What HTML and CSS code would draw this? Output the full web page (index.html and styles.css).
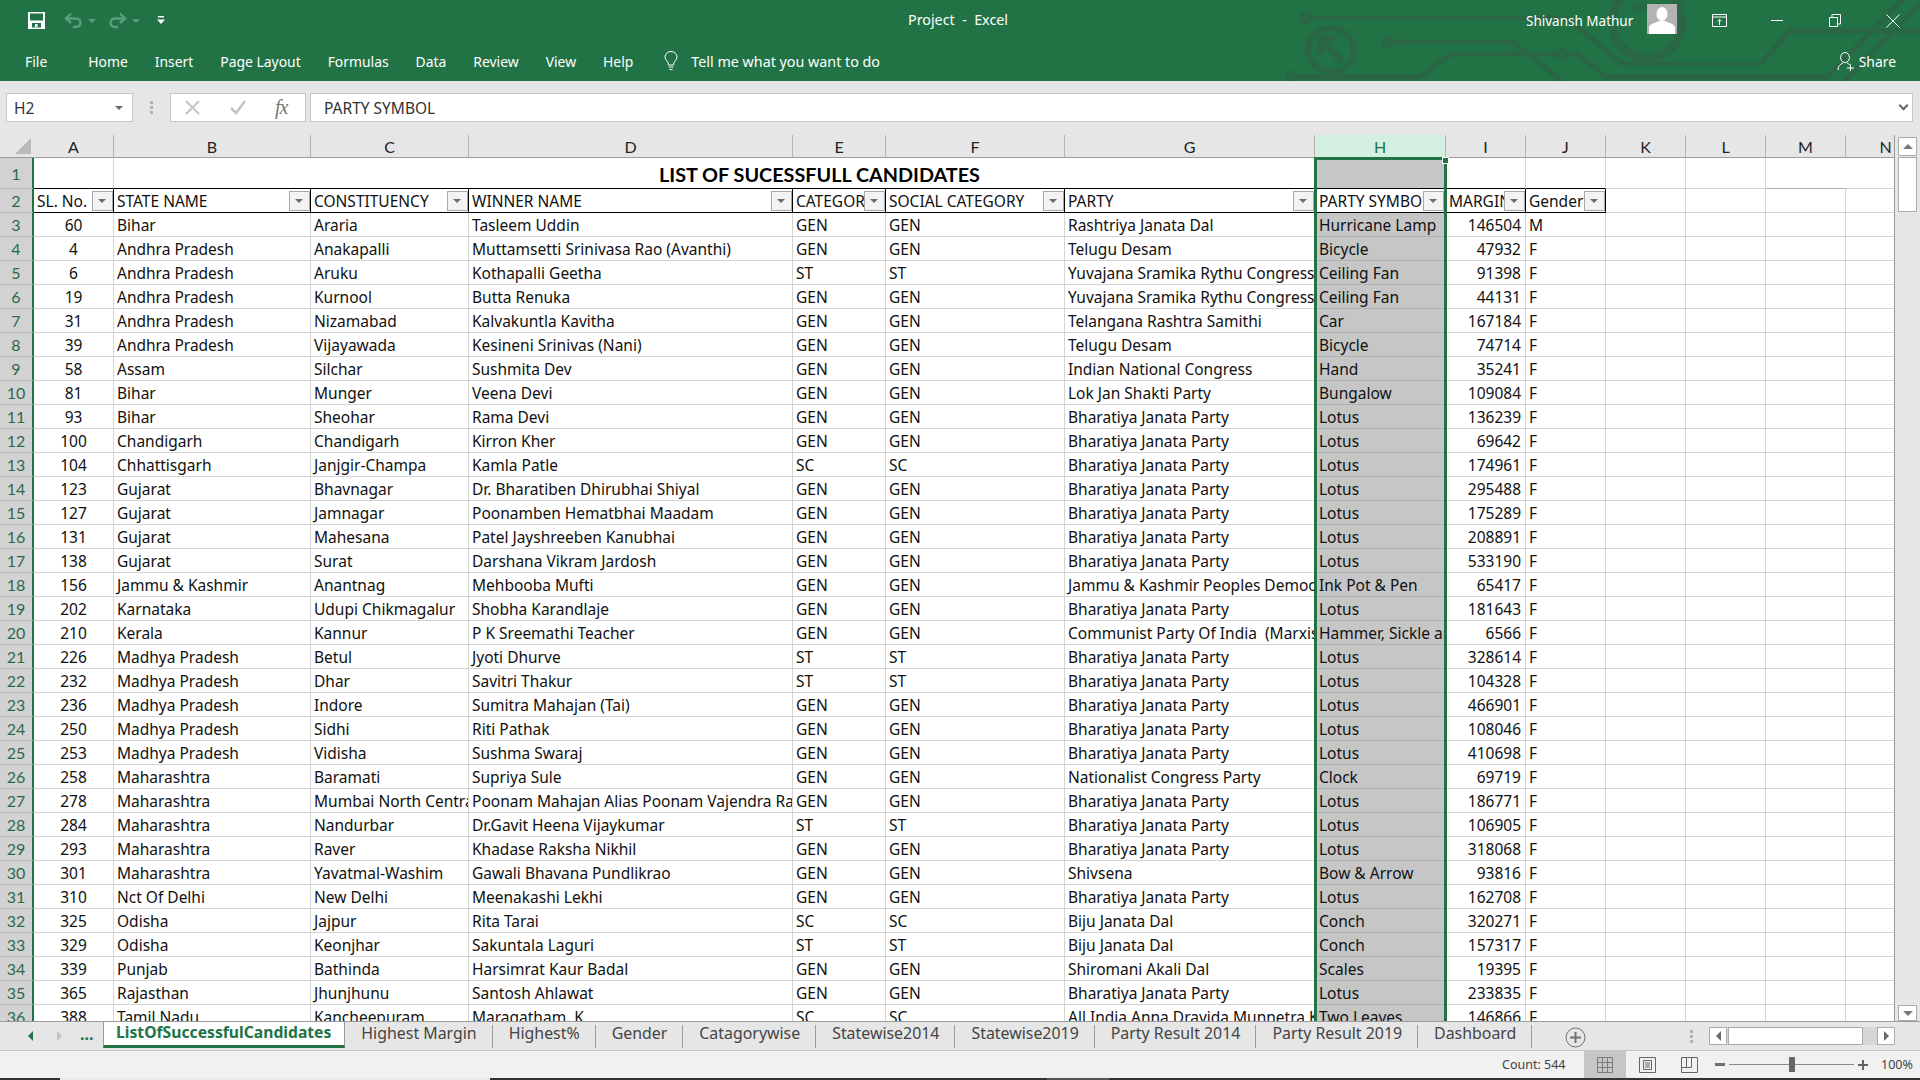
FILE: index.html
```html
<!DOCTYPE html>
<html lang="en">
<head>
  <meta charset="UTF-8">
  <title>Project - Excel</title>
  <link rel="stylesheet" href="styles.css">
</head>
<body>

<div class="ribbon">
  <!-- circuit pattern behind the title bar -->
  <svg class="circuit" width="640" height="81" viewBox="1280 0 640 81" fill="none" stroke="#2a6644" stroke-width="5">
    <circle cx="1306" cy="18" r="4"/>
    <path d="M1310 18H1566L1623 64H1760L1790 31H1920"/>
    <circle cx="1388" cy="42" r="4"/>
    <path d="M1392 42H1513L1562 81"/>
    <circle cx="1292" cy="77" r="4"/>
    <path d="M1296 77H1419L1451 54H1558"/>
    <circle cx="1562" cy="54" r="4"/>
    <path d="M1566 54H1578L1606 77H1827L1904 -2"/>
    <path d="M1843 83L1920 4"/>
    <ellipse cx="1331" cy="50" rx="23" ry="22" stroke-width="6"/>
    <path d="M1322 40L1342 62M1321 54V39H1336" stroke-width="7"/>
    <ellipse cx="1647" cy="22" rx="35" ry="36" stroke-width="8"/>
    <path d="M1633 7H1660V30" stroke-width="7"/>
  </svg>

  <div class="titlebar">
    <div class="qat">
      <svg class="save" width="17" height="17" viewBox="0 0 17 17"><path fill="#fff" d="M0 0H17V17H0ZM2 1.500V8.500H15V1.500ZM4 11V15.500H13V11ZM7 12H9.500V15H7Z" fill-rule="evenodd"/></svg>
      <svg class="undo" width="19" height="17" viewBox="0 0 19 17" fill="none" stroke="#5c9d7b" stroke-width="2.400"><path d="M7 1.500L2 6.500L7 11"/><path d="M3 6.500H12C18 6.500 18 15 12 15H9"/></svg>
      <span class="caret dim"></span>
      <svg class="redo" width="19" height="17" viewBox="0 0 19 17" fill="none" stroke="#5c9d7b" stroke-width="2.400"><path d="M12 1.500L17 6.500L12 11"/><path d="M16 6.500H7C1 6.500 1 15 7 15H10"/></svg>
      <span class="caret dim"></span>
      <svg class="custom" width="8" height="9" viewBox="0 0 8 9"><path fill="#fff" d="M1 0H7V1.500H1ZM0 3.500H8L4 8Z"/></svg>
    </div>
    <div class="doc-title">Project&nbsp; -&nbsp; Excel</div>
    <div class="account">
      <span class="username">Shivansh Mathur</span>
      <span class="avatar">
        <svg width="30" height="30" viewBox="0 0 30 30"><rect width="30" height="30" fill="#b3b3b3"/><ellipse cx="15" cy="10" rx="5.500" ry="7" fill="#fff"/><path fill="#fff" d="M2 30V24C2 20 8 19 12 17H18C22 19 28 20 28 24V30Z"/></svg>
      </span>
      <svg class="win-ribbon" width="15" height="13" viewBox="0 0 15 13" fill="none" stroke="#fff"><path d="M.5 .5H14.500V12.500H.5ZM.5 3H14.500M7.500 11V5.500M5.500 7.500L7.500 5.500L9.500 7.500"/></svg>
      <svg class="win-min" width="12" height="1" viewBox="0 0 12 1"><path stroke="#fff" d="M0 .5H12"/></svg>
      <svg class="win-max" width="12" height="13" viewBox="0 0 12 13" fill="none" stroke="#fff"><path d="M.5 3.500H8.500V12.500H.5ZM3 3.500V.5H11.500V10H8.500"/></svg>
      <svg class="win-close" width="14" height="14" viewBox="0 0 14 14" fill="none" stroke="#fff"><path d="M.5 .5L13.500 13.500M13.500 .5L.5 13.500"/></svg>
    </div>
  </div>

  <div class="menubar">
    <span class="menu-file">File</span>
    <span>Home</span>
    <span>Insert</span>
    <span>Page Layout</span>
    <span>Formulas</span>
    <span>Data</span>
    <span>Review</span>
    <span>View</span>
    <span>Help</span>
    <svg class="bulb" width="14" height="20" viewBox="0 0 14 20" fill="none" stroke="#fff"><path d="M4.500 14C4.500 10 1 9.500 1 6A6 5.500 0 0 1 13 6C13 9.500 9.500 10 9.500 14ZM4.500 16H9.500M5.500 18.500H8.500"/></svg>
    <span class="tell">Tell me what you want to do</span>
    <span class="share">
      <svg width="18" height="19" viewBox="0 0 18 19" fill="none" stroke="#fff"><ellipse cx="8" cy="5.500" rx="4.500" ry="5"/><path d="M1 18C1 14 3 12.500 6 11M10 11C11 11.500 12 12 13 13M10 16H17M13.500 12.500V19"/></svg>
      Share
    </span>
  </div>
</div>

<div class="formula-bar">
  <div class="name-box">H2<span class="caret"></span></div>
  <span class="grip"></span>
  <div class="fx-box">
    <svg width="15" height="15" viewBox="0 0 15 15" fill="none" stroke="#c4c4c4" stroke-width="2"><path d="M1 1L14 14M14 1L1 14"/></svg>
    <svg width="16" height="15" viewBox="0 0 16 15" fill="none" stroke="#c4c4c4" stroke-width="2.500"><path d="M1 8L6 13L15 1"/></svg>
    <span class="fx">fx</span>
  </div>
  <div class="formula-input">PARTY SYMBOL<span class="chevron"></span></div>
</div>

<div class="sheet">
  <div class="grid">
    <table>
      <colgroup>
        <col class="c-head"><col class="c-a"><col class="c-b"><col class="c-c"><col class="c-d"><col class="c-e"><col class="c-f"><col class="c-g"><col class="c-h"><col class="c-n"><col class="c-n"><col class="c-n"><col class="c-n"><col class="c-n"><col class="c-n">
      </colgroup>
      <thead>
        <tr>
          <th class="corner"><span class="corner-mark"></span></th>
          <th>A</th><th>B</th><th>C</th><th>D</th><th>E</th><th>F</th><th>G</th><th class="on">H</th><th>I</th><th>J</th><th>K</th><th>L</th><th>M</th><th>N</th>
        </tr>
      </thead>
      <tbody>
        <tr class="r1"><th>1</th><td></td><td class="title" colspan="6">LIST OF SUCESSFULL CANDIDATES</td><td></td><td></td><td></td><td></td><td></td><td></td><td></td></tr>
        <tr class="r2"><th>2</th>
          <td>SL. No.<i></i></td><td>STATE NAME<i></i></td><td>CONSTITUENCY<i></i></td><td>WINNER NAME<i></i></td><td>CATEGORY<i></i></td><td>SOCIAL CATEGORY<i></i></td><td>PARTY<i></i></td><td class="active">PARTY SYMBOL<i></i></td><td>MARGIN<i></i></td><td>Gender<i></i></td><td></td><td></td><td></td><td></td></tr>
        <tr><th>3</th><td>60</td><td>Bihar</td><td>Araria</td><td>Tasleem Uddin</td><td>GEN</td><td>GEN</td><td>Rashtriya Janata Dal</td><td>Hurricane Lamp</td><td>146504</td><td>M</td><td></td><td></td><td></td><td></td></tr>
        <tr><th>4</th><td>4</td><td>Andhra Pradesh</td><td>Anakapalli</td><td>Muttamsetti Srinivasa Rao (Avanthi)</td><td>GEN</td><td>GEN</td><td>Telugu Desam</td><td>Bicycle</td><td>47932</td><td>F</td><td></td><td></td><td></td><td></td></tr>
        <tr><th>5</th><td>6</td><td>Andhra Pradesh</td><td>Aruku</td><td>Kothapalli Geetha</td><td>ST</td><td>ST</td><td>Yuvajana Sramika Rythu Congress Party</td><td>Ceiling Fan</td><td>91398</td><td>F</td><td></td><td></td><td></td><td></td></tr>
        <tr><th>6</th><td>19</td><td>Andhra Pradesh</td><td>Kurnool</td><td>Butta Renuka</td><td>GEN</td><td>GEN</td><td>Yuvajana Sramika Rythu Congress Party</td><td>Ceiling Fan</td><td>44131</td><td>F</td><td></td><td></td><td></td><td></td></tr>
        <tr><th>7</th><td>31</td><td>Andhra Pradesh</td><td>Nizamabad</td><td>Kalvakuntla Kavitha</td><td>GEN</td><td>GEN</td><td>Telangana Rashtra Samithi</td><td>Car</td><td>167184</td><td>F</td><td></td><td></td><td></td><td></td></tr>
        <tr><th>8</th><td>39</td><td>Andhra Pradesh</td><td>Vijayawada</td><td>Kesineni Srinivas (Nani)</td><td>GEN</td><td>GEN</td><td>Telugu Desam</td><td>Bicycle</td><td>74714</td><td>F</td><td></td><td></td><td></td><td></td></tr>
        <tr><th>9</th><td>58</td><td>Assam</td><td>Silchar</td><td>Sushmita Dev</td><td>GEN</td><td>GEN</td><td>Indian National Congress</td><td>Hand</td><td>35241</td><td>F</td><td></td><td></td><td></td><td></td></tr>
        <tr><th>10</th><td>81</td><td>Bihar</td><td>Munger</td><td>Veena Devi</td><td>GEN</td><td>GEN</td><td>Lok Jan Shakti Party</td><td>Bungalow</td><td>109084</td><td>F</td><td></td><td></td><td></td><td></td></tr>
        <tr><th>11</th><td>93</td><td>Bihar</td><td>Sheohar</td><td>Rama Devi</td><td>GEN</td><td>GEN</td><td>Bharatiya Janata Party</td><td>Lotus</td><td>136239</td><td>F</td><td></td><td></td><td></td><td></td></tr>
        <tr><th>12</th><td>100</td><td>Chandigarh</td><td>Chandigarh</td><td>Kirron Kher</td><td>GEN</td><td>GEN</td><td>Bharatiya Janata Party</td><td>Lotus</td><td>69642</td><td>F</td><td></td><td></td><td></td><td></td></tr>
        <tr><th>13</th><td>104</td><td>Chhattisgarh</td><td>Janjgir-Champa</td><td>Kamla Patle</td><td>SC</td><td>SC</td><td>Bharatiya Janata Party</td><td>Lotus</td><td>174961</td><td>F</td><td></td><td></td><td></td><td></td></tr>
        <tr><th>14</th><td>123</td><td>Gujarat</td><td>Bhavnagar</td><td>Dr. Bharatiben Dhirubhai Shiyal</td><td>GEN</td><td>GEN</td><td>Bharatiya Janata Party</td><td>Lotus</td><td>295488</td><td>F</td><td></td><td></td><td></td><td></td></tr>
        <tr><th>15</th><td>127</td><td>Gujarat</td><td>Jamnagar</td><td>Poonamben Hematbhai Maadam</td><td>GEN</td><td>GEN</td><td>Bharatiya Janata Party</td><td>Lotus</td><td>175289</td><td>F</td><td></td><td></td><td></td><td></td></tr>
        <tr><th>16</th><td>131</td><td>Gujarat</td><td>Mahesana</td><td>Patel Jayshreeben Kanubhai</td><td>GEN</td><td>GEN</td><td>Bharatiya Janata Party</td><td>Lotus</td><td>208891</td><td>F</td><td></td><td></td><td></td><td></td></tr>
        <tr><th>17</th><td>138</td><td>Gujarat</td><td>Surat</td><td>Darshana Vikram Jardosh</td><td>GEN</td><td>GEN</td><td>Bharatiya Janata Party</td><td>Lotus</td><td>533190</td><td>F</td><td></td><td></td><td></td><td></td></tr>
        <tr><th>18</th><td>156</td><td>Jammu &amp; Kashmir</td><td>Anantnag</td><td>Mehbooba Mufti</td><td>GEN</td><td>GEN</td><td>Jammu &amp; Kashmir Peoples Democratic Party</td><td>Ink Pot &amp; Pen</td><td>65417</td><td>F</td><td></td><td></td><td></td><td></td></tr>
        <tr><th>19</th><td>202</td><td>Karnataka</td><td>Udupi Chikmagalur</td><td>Shobha Karandlaje</td><td>GEN</td><td>GEN</td><td>Bharatiya Janata Party</td><td>Lotus</td><td>181643</td><td>F</td><td></td><td></td><td></td><td></td></tr>
        <tr><th>20</th><td>210</td><td>Kerala</td><td>Kannur</td><td>P K Sreemathi Teacher</td><td>GEN</td><td>GEN</td><td>Communist Party Of India&nbsp; (Marxist)</td><td>Hammer, Sickle and Star</td><td>6566</td><td>F</td><td></td><td></td><td></td><td></td></tr>
        <tr><th>21</th><td>226</td><td>Madhya Pradesh</td><td>Betul</td><td>Jyoti Dhurve</td><td>ST</td><td>ST</td><td>Bharatiya Janata Party</td><td>Lotus</td><td>328614</td><td>F</td><td></td><td></td><td></td><td></td></tr>
        <tr><th>22</th><td>232</td><td>Madhya Pradesh</td><td>Dhar</td><td>Savitri Thakur</td><td>ST</td><td>ST</td><td>Bharatiya Janata Party</td><td>Lotus</td><td>104328</td><td>F</td><td></td><td></td><td></td><td></td></tr>
        <tr><th>23</th><td>236</td><td>Madhya Pradesh</td><td>Indore</td><td>Sumitra Mahajan (Tai)</td><td>GEN</td><td>GEN</td><td>Bharatiya Janata Party</td><td>Lotus</td><td>466901</td><td>F</td><td></td><td></td><td></td><td></td></tr>
        <tr><th>24</th><td>250</td><td>Madhya Pradesh</td><td>Sidhi</td><td>Riti Pathak</td><td>GEN</td><td>GEN</td><td>Bharatiya Janata Party</td><td>Lotus</td><td>108046</td><td>F</td><td></td><td></td><td></td><td></td></tr>
        <tr><th>25</th><td>253</td><td>Madhya Pradesh</td><td>Vidisha</td><td>Sushma Swaraj</td><td>GEN</td><td>GEN</td><td>Bharatiya Janata Party</td><td>Lotus</td><td>410698</td><td>F</td><td></td><td></td><td></td><td></td></tr>
        <tr><th>26</th><td>258</td><td>Maharashtra</td><td>Baramati</td><td>Supriya Sule</td><td>GEN</td><td>GEN</td><td>Nationalist Congress Party</td><td>Clock</td><td>69719</td><td>F</td><td></td><td></td><td></td><td></td></tr>
        <tr><th>27</th><td>278</td><td>Maharashtra</td><td>Mumbai North Central</td><td>Poonam Mahajan Alias Poonam Vajendra Rao</td><td>GEN</td><td>GEN</td><td>Bharatiya Janata Party</td><td>Lotus</td><td>186771</td><td>F</td><td></td><td></td><td></td><td></td></tr>
        <tr><th>28</th><td>284</td><td>Maharashtra</td><td>Nandurbar</td><td>Dr.Gavit Heena Vijaykumar</td><td>ST</td><td>ST</td><td>Bharatiya Janata Party</td><td>Lotus</td><td>106905</td><td>F</td><td></td><td></td><td></td><td></td></tr>
        <tr><th>29</th><td>293</td><td>Maharashtra</td><td>Raver</td><td>Khadase Raksha Nikhil</td><td>GEN</td><td>GEN</td><td>Bharatiya Janata Party</td><td>Lotus</td><td>318068</td><td>F</td><td></td><td></td><td></td><td></td></tr>
        <tr><th>30</th><td>301</td><td>Maharashtra</td><td>Yavatmal-Washim</td><td>Gawali Bhavana Pundlikrao</td><td>GEN</td><td>GEN</td><td>Shivsena</td><td>Bow &amp; Arrow</td><td>93816</td><td>F</td><td></td><td></td><td></td><td></td></tr>
        <tr><th>31</th><td>310</td><td>Nct Of Delhi</td><td>New Delhi</td><td>Meenakashi Lekhi</td><td>GEN</td><td>GEN</td><td>Bharatiya Janata Party</td><td>Lotus</td><td>162708</td><td>F</td><td></td><td></td><td></td><td></td></tr>
        <tr><th>32</th><td>325</td><td>Odisha</td><td>Jajpur</td><td>Rita Tarai</td><td>SC</td><td>SC</td><td>Biju Janata Dal</td><td>Conch</td><td>320271</td><td>F</td><td></td><td></td><td></td><td></td></tr>
        <tr><th>33</th><td>329</td><td>Odisha</td><td>Keonjhar</td><td>Sakuntala Laguri</td><td>ST</td><td>ST</td><td>Biju Janata Dal</td><td>Conch</td><td>157317</td><td>F</td><td></td><td></td><td></td><td></td></tr>
        <tr><th>34</th><td>339</td><td>Punjab</td><td>Bathinda</td><td>Harsimrat Kaur Badal</td><td>GEN</td><td>GEN</td><td>Shiromani Akali Dal</td><td>Scales</td><td>19395</td><td>F</td><td></td><td></td><td></td><td></td></tr>
        <tr><th>35</th><td>365</td><td>Rajasthan</td><td>Jhunjhunu</td><td>Santosh Ahlawat</td><td>GEN</td><td>GEN</td><td>Bharatiya Janata Party</td><td>Lotus</td><td>233835</td><td>F</td><td></td><td></td><td></td><td></td></tr>
        <tr><th>36</th><td>388</td><td>Tamil Nadu</td><td>Kancheepuram</td><td>Maragatham. K</td><td>SC</td><td>SC</td><td>All India Anna Dravida Munnetra Kazhagam</td><td>Two Leaves</td><td>146866</td><td>F</td><td></td><td></td><td></td><td></td></tr>
      </tbody>
    </table>
    <div class="selection"><span class="handle"></span></div>
  </div>
  <div class="vscroll">
    <span class="sb-btn"><span class="tri-up"></span></span>
    <span class="sb-thumb"></span>
    <span class="sb-track"></span>
    <span class="sb-btn"><span class="tri-down"></span></span>
  </div>
</div>

<div class="tabbar">
  <div class="tab-nav">
    <span class="tri-left green"></span>
    <span class="tri-right pale"></span>
    <span class="more">...</span>
  </div>
  <div class="tab active-tab">ListOfSuccessfulCandidates</div>
  <div class="tab">Highest Margin</div>
  <div class="tab">Highest%</div>
  <div class="tab">Gender</div>
  <div class="tab">Catagorywise</div>
  <div class="tab">Statewise2014</div>
  <div class="tab">Statewise2019</div>
  <div class="tab">Party Result 2014</div>
  <div class="tab">Party Result 2019</div>
  <div class="tab">Dashboard</div>
  <svg class="add-sheet" width="21" height="21" viewBox="0 0 21 21" fill="none" stroke="#707070"><circle cx="10.500" cy="10.500" r="9.500"/><path stroke-width="2" d="M10.500 5V16M5 10.500H16"/></svg>
  <span class="grip tab-grip"></span>
  <div class="hscroll">
    <span class="hs-btn"><span class="tri-left"></span></span>
    <span class="hs-thumb"></span>
    <span class="hs-track"></span>
    <span class="hs-btn"><span class="tri-right"></span></span>
  </div>
</div>

<div class="statusbar">
  <span class="count">Count: 544</span>
  <span class="view view-on">
    <svg width="16" height="16" viewBox="0 0 16 16" fill="none" stroke="#7a7a7a"><path d="M.5 .5H15.500V15.500H.5ZM5.500 .5V15.500M10.500 .5V15.500M.5 5.500H15.500M.5 10.500H15.500"/></svg>
  </span>
  <span class="view">
    <svg width="17" height="16" viewBox="0 0 17 16" fill="none" stroke="#666"><path d="M.5 .5H16.500V15.500H.5ZM4.500 3.500H12.500V12.500H4.500ZM6 6H11M6 8H11M6 10H11"/></svg>
  </span>
  <span class="view">
    <svg width="17" height="16" viewBox="0 0 17 16" fill="none" stroke="#666"><path d="M.5 .5H16.500V15.500H.5ZM.5 10.500H10.500V.5M5.500 .5V10.500"/></svg>
  </span>
  <span class="zoom-minus"></span>
  <span class="slider"><span class="slider-thumb"></span></span>
  <span class="zoom-plus"></span>
  <span class="zoom-pct">100%</span>
</div>

<div class="taskstrip"><span class="ts-light"></span><span class="ts-mid"></span></div>

</body>
</html>
```

FILE: styles.css
```css
* {
  box-sizing: border-box;
}

html, body {
  height: 100%;
}

body {
  margin: 0;
  display: flex;
  flex-direction: column;
  overflow: hidden;
  background: #e6e6e6;
  font-family: "Noto Sans", sans-serif;
  color: #222;
}

/* ribbon */
.ribbon {
  position: relative;
  height: 81px;
  flex: none;
  background: #217346;
  color: #fff;
  overflow: hidden;
}

.circuit {
  position: absolute;
  left: 1280px;
  top: 0;
}

.titlebar {
  position: relative;
  height: 41px;
  display: flex;
  align-items: center;
}

.qat {
  display: flex;
  align-items: center;
  width: 908px;
  padding-left: 28px;
}

.undo {
  margin-left: 19px;
}

.redo {
  margin-left: 12px;
}

.caret {
  width: 0;
  height: 0;
  border-left: 4px solid transparent;
  border-right: 4px solid transparent;
  border-top: 4px solid #6a6a6a;
}

.caret.dim {
  margin-left: 5px;
  border-top-color: #5c9d7b;
}

.custom {
  margin-left: 17px;
}

.doc-title {
  font-size: 14.3px;
  width: 618px;
  padding-bottom: 2px;
}

.account {
  display: flex;
  align-items: center;
  font-size: 13.5px;
}

.username {
  width: 121px;
}

.avatar {
  display: flex;
  margin-top: -3px;
}

.win-ribbon {
  margin-left: 35px;
}

.win-min {
  margin-left: 44px;
}

.win-max {
  margin-left: 46px;
}

.win-close {
  margin-left: 45px;
}

.menubar {
  position: relative;
  height: 40px;
  padding-left: 25px;
  display: flex;
  align-items: center;
  gap: 27px;
  font-size: 13.9px;
}

.menu-file {
  margin-right: 14px;
}

.bulb {
  margin-left: 4px;
  margin-right: -14px;
}

.tell {
  font-size: 14.3px;
}

.share {
  margin-left: auto;
  margin-right: 24px;
  display: flex;
  align-items: center;
  gap: 4px;
}

/* formula bar */
.formula-bar {
  height: 54px;
  flex: none;
  padding: 12px 7px 13px 6px;
  display: flex;
  font-size: 15.5px;
}

.name-box, .fx-box, .formula-input {
  display: flex;
  align-items: center;
  background: #fff;
  border: 1px solid #c6c6c6;
  color: #333;
}

.name-box {
  width: 127px;
  padding: 0 9px 0 7px;
  justify-content: space-between;
}

.grip {
  width: 3px;
  height: 13px;
  align-self: center;
  margin: 0 17px 0 17px;
  background: repeating-linear-gradient(#b0b0b0 0 3px, transparent 3px 5px);
}

.fx-box {
  width: 136px;
  padding-left: 14px;
  gap: 30px;
}

.fx-box .fx {
  font-family: "Liberation Serif", serif;
  font-style: italic;
  font-size: 20px;
  color: #777;
  letter-spacing: -1px;
  margin-left: -1px;
}

.formula-input {
  flex: 1;
  margin-left: 4px;
  padding: 0 1px 0 13px;
  justify-content: space-between;
}

.chevron {
  width: 7px;
  height: 7px;
  margin: -4px 4px 0 0;
  border-right: 2px solid #666;
  border-bottom: 2px solid #666;
  transform: rotate(45deg);
}

/* sheet */
.sheet {
  height: 887px;
  flex: none;
  display: flex;
  border-bottom: 1px solid #9c9c9c;
}

.grid {
  position: relative;
  width: 1895px;
  overflow: hidden;
  background: #fff;
  border-right: 1px solid #9c9c9c;
}

table {
  width: 1926px;
  table-layout: fixed;
  border-collapse: separate;
  border-spacing: 0;
  font-family: "Noto Sans", sans-serif;
  font-size: 15.5px;
  color: #111;
}

.c-head { width: 34px; }
.c-a { width: 80px; }
.c-b { width: 197px; }
.c-c { width: 158px; }
.c-d { width: 324px; }
.c-e { width: 93px; }
.c-f { width: 179px; }
.c-g { width: 250px; }
.c-h { width: 131px; background: #c6c6c6; }
.c-n { width: 80px; }

thead th {
  height: 23px;
  padding: 1px 0 0;
  background: #e6e6e6;
  border-right: 1px solid #b4b4b4;
  border-bottom: 1px solid #9c9c9c;
  font-family: Lato, sans-serif;
  font-weight: normal;
  font-size: 16px;
  color: #222;
}

thead th.on {
  background: #d3f0e0;
  color: #217346;
}

thead th.corner {
  position: relative;
  background: #e6e6e6;
  border-right: 0;
}

.corner-mark {
  position: absolute;
  right: 3px;
  bottom: 3px;
  width: 0;
  height: 0;
  border-left: 16px solid transparent;
  border-bottom: 16px solid #b9b9b9;
}

tbody th {
  padding: 0;
  background: #d2d2d2;
  border-right: 2px solid #217346;
  border-bottom: 1px solid #b4b4b4;
  font-family: Lato, sans-serif;
  font-weight: normal;
  font-size: 16px;
  color: #2a6a4a;
}

tbody tr {
  height: 24px;
}

td {
  position: relative;
  padding: 0 3px;
  overflow: hidden;
  white-space: nowrap;
  border-right: 1px solid #d4d4d4;
  border-bottom: 1px solid #d4d4d4;
}

tbody td:nth-child(2) {
  text-align: center;
}

tbody td:nth-child(9) {
  border-right: 0;
  padding-left: 4px;
  border-bottom-color: #b0b0b0;
}

tbody td:nth-child(10) {
  text-align: right;
  padding-right: 4px;
}

tbody tr.r1 {
  height: 31px;
}

/* cells above the filter row carry its black top edge */
tr.r1 td:nth-child(-n+6) {
  border-bottom-color: #000;
}

.title {
  padding: 2px 0 0 545px;
  font-family: Lato, sans-serif;
  font-size: 19.8px;
  font-weight: bold;
  color: #000;
}

tbody tr.r2 td {
  text-align: left;
  padding-left: 3px;
  border-right-color: #000;
  border-bottom-color: #000;
}

tbody tr.r2 td:nth-child(n+12) {
  border-right-color: #d4d4d4;
  border-bottom-color: #d4d4d4;
}

tbody tr.r2 td.active {
  padding-left: 4px;
  background: #fff;
}

/* filter button on a header cell */
tr.r2 i {
  position: absolute;
  right: 0;
  top: 2px;
  width: 21px;
  height: 20px;
  background: #f3f3f3;
  border: 1px solid #a4a9b4;
}

tr.r2 i::after {
  content: "";
  position: absolute;
  left: 5px;
  top: 7px;
  border-left: 4px solid transparent;
  border-right: 4px solid transparent;
  border-top: 4px solid #6c6c6c;
}

tr.r2 .active i {
  right: 2px;
}

.selection {
  position: absolute;
  left: 1314px;
  top: 22px;
  width: 133px;
  bottom: 0;
  border: 3px solid #217346;
  border-bottom: 0;
}

.handle {
  position: absolute;
  right: -4px;
  top: -2px;
  width: 5px;
  height: 5px;
  background: #217346;
  outline: 1px solid #fff;
}

.vscroll {
  flex: 1;
  padding: 2px 3px 0;
  display: flex;
  flex-direction: column;
}

.sb-btn {
  height: 19px;
  flex: none;
  display: flex;
  align-items: center;
  justify-content: center;
  background: #fff;
  border: 1px solid #ababab;
}

.sb-thumb {
  height: 55px;
  flex: none;
  margin-top: 1px;
  background: #fff;
  border: 1px solid #ababab;
}

.sb-track {
  flex: 1;
}

.vscroll .sb-btn:last-child {
  height: 16px;
}

.tri-up, .tri-down {
  border-left: 5px solid transparent;
  border-right: 5px solid transparent;
}

.tri-up {
  border-bottom: 5px solid #777;
}

.tri-down {
  border-top: 5px solid #777;
}

.tri-left, .tri-right {
  display: block;
  border-top: 5px solid transparent;
  border-bottom: 5px solid transparent;
}

.tri-left {
  border-right: 5px solid #6a6a6a;
}

.tri-right {
  border-left: 5px solid #6a6a6a;
}

.tri-left.green {
  border-right-color: #217346;
}

.tri-right.pale {
  border-left-color: #c2c2c2;
}

/* sheet tabs */
.tabbar {
  height: 29px;
  flex: none;
  padding-right: 25px;
  display: flex;
  align-items: flex-start;
  font-size: 15.9px;
  color: #444;
  border-bottom: 1px solid #c6c6c6;
}

.tab-nav {
  width: 103px;
  height: 28px;
  padding-left: 28px;
  display: flex;
  align-items: center;
  color: #217346;
}

.tri-right.pale {
  margin-left: 24px;
}

.more {
  margin-left: 18px;
  margin-top: -5px;
  font-weight: bold;
}

.tab {
  height: 23px;
  margin-top: 3px;
  padding: 0 15px 0 16px;
  line-height: 16px;
  border-right: 1px solid #9c9c9c;
}

.active-tab {
  height: 26px;
  margin-top: 0;
  padding: 0 13px 0 12px;
  line-height: 20px;
  font-size: 15.7px;
  background: #fff;
  color: #217346;
  font-weight: bold;
  border-left: 1px solid #9c9c9c;
  border-right: 1px solid #9c9c9c;
  border-bottom: 3px solid #217346;
}

.add-sheet {
  margin: 5px 0 0 33px;
}

.tab-grip {
  margin: 8px 16px 0 auto;
  align-self: flex-start;
}

.hscroll {
  margin-top: 5px;
  width: 186px;
  height: 18px;
  display: flex;
  background: #d6d6d6;
}

.hs-btn {
  width: 18px;
  display: flex;
  align-items: center;
  justify-content: center;
  background: #fff;
  border: 1px solid #ababab;
}

.hs-thumb {
  width: 135px;
  margin-left: 1px;
  background: #fff;
  border: 1px solid #ababab;
}

.hs-track {
  flex: 1;
}

/* status bar */
.statusbar {
  height: 27px;
  flex: none;
  display: flex;
  align-items: center;
  padding-left: 1502px;
  background: #f1f1f1;
  font-size: 12.5px;
  color: #444;
}

.count {
  width: 82px;
}

.view {
  width: 42px;
  height: 27px;
  margin-right: 0;
  display: flex;
  align-items: center;
  justify-content: center;
}

.view-on {
  background: #c6c6c6;
}

.view:nth-child(3) {
  margin-left: 2px;
  width: 38px;
}

.view:nth-child(4) {
  width: 46px;
}

.zoom-minus {
  width: 10px;
  height: 3px;
  margin-left: 3px;
  background: #707070;
}

.slider {
  position: relative;
  width: 125px;
  height: 1px;
  margin-left: 4px;
  background: #8a8a8a;
}

.slider-thumb {
  position: absolute;
  left: 60px;
  top: -7px;
  width: 6px;
  height: 15px;
  background: #666;
}

.zoom-plus {
  position: relative;
  width: 10px;
  height: 10px;
  margin-left: 4px;
  background: linear-gradient(#666, #666) center / 10px 2px no-repeat,
              linear-gradient(#666, #666) center / 2px 10px no-repeat;
}

.zoom-pct {
  margin-left: 13px;
}

.taskstrip {
  height: 2px;
  flex: none;
  display: flex;
  background: #333;
}

.ts-light {
  width: 430px;
  margin-left: 60px;
  background: #e9e9e9;
}

.ts-mid {
  width: 62px;
  margin-left: 557px;
  background: #555;
}
```
